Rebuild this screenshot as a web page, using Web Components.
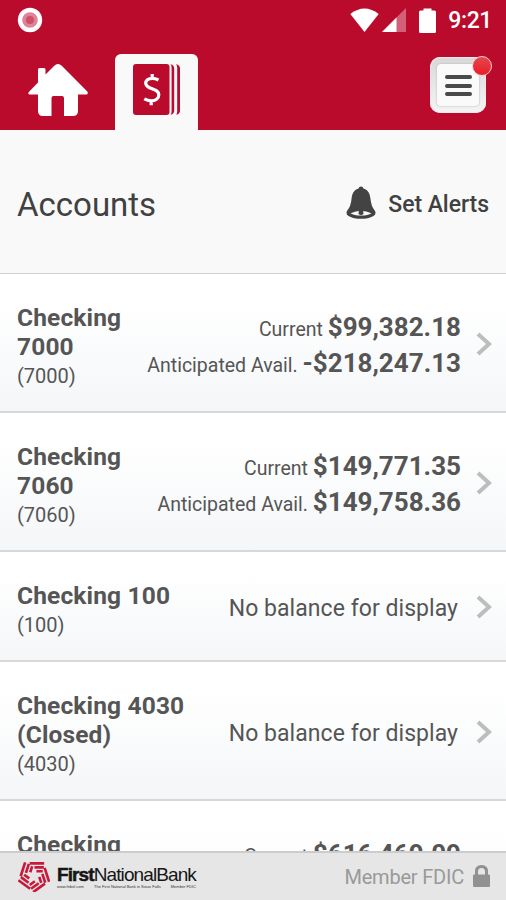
<!DOCTYPE html>
<html lang="en">
<head>
<meta charset="utf-8">
<meta name="viewport" content="width=device-width, initial-scale=1">
<title>Accounts</title>
<style>
    html, body { height: 100%; margin: 0; }
    body { overflow: hidden; font-family: Roboto, "Liberation Sans", sans-serif; }
</style>
</head>
<body>
<bank-app>
    <status-bar slot="top" time="9:21"></status-bar>
    <nav-tabs slot="top"></nav-tabs>
    <page-header heading="Accounts" action="Set Alerts"></page-header>
    <account-row name="Checking 7000" number="7000" current="$99,382.18" available="-$218,247.13"></account-row>
    <account-row name="Checking 7060" number="7060" current="$149,771.35" available="$149,758.36"></account-row>
    <account-row name="Checking 100" number="100"></account-row>
    <account-row name="Checking 4030 (Closed)" number="4030"></account-row>
    <account-row peek name="Checking" current="$616,469.09"></account-row>
    <bank-footer slot="bottom"></bank-footer>
</bank-app>

<script>
class BankApp extends HTMLElement {
    connectedCallback() {
        this.attachShadow({ mode: 'open' });
        this.shadowRoot.innerHTML = `
            <style>
                :host {
                    display: flex;
                    flex-direction: column;
                    height: 100vh;
                    background: #fff;
                    color: #555;
                    --red: #ba0b2d;
                }
                main { flex: 1; min-height: 0; overflow: hidden; }
            </style>
            <slot name="top"></slot>
            <main><slot></slot></main>
            <slot name="bottom"></slot>
        `;
    }
}

class StatusBar extends HTMLElement {
    connectedCallback() {
        this.attachShadow({ mode: 'open' });
        this.shadowRoot.innerHTML = `
            <style>
                :host {
                    display: flex;
                    align-items: center;
                    height: 42px;
                    box-sizing: border-box;
                    padding: 0 14px 0 17px;
                    background: var(--red);
                    color: #fff;
                }
                svg { display: block; flex: none; }
                .rec { margin: -2px auto 0 0; }
                .wifi { margin: -2px 3px 0 0; }
                .signal { margin: -2px 13px 0 0; }
                .battery { margin: -2px 12px 0 0; }
                .time { font-size: 23px; font-weight: 500; line-height: 42px; letter-spacing: -0.4px; }
            </style>
            <svg class="rec" width="26" height="26" viewBox="0 0 26 26">
                <circle cx="13" cy="13" r="12.2" fill="#fff"/>
                <circle cx="13" cy="13" r="7.8" fill="#df8498"/>
                <circle cx="13" cy="13" r="4" fill="#cf5068"/>
            </svg>
            <svg class="wifi" width="29" height="24" viewBox="0 0 29 24">
                <path d="M0.3 6 Q14.5 -5 28.7 6 L14.5 24Z" fill="#fff"/>
            </svg>
            <svg class="signal" width="24" height="24" viewBox="0 0 24 24">
                <path d="M0 24 24 0V24Z" fill="#fff" opacity=".35"/>
                <path d="M0 24 14.5 9.5V24Z" fill="#fff"/>
            </svg>
            <svg class="battery" width="17" height="25" viewBox="0 0 17 25">
                <path d="M1.5 2.5H4.5V0.5H12.5V2.5H15.5Q17 2.5 17 4V23.5Q17 25 15.5 25H1.5Q0 25 0 23.5V4Q0 2.5 1.5 2.5Z" fill="#fff"/>
            </svg>
            <span class="time">${this.getAttribute('time')}</span>
        `;
    }
}

class NavTabs extends HTMLElement {
    connectedCallback() {
        this.attachShadow({ mode: 'open' });
        this.shadowRoot.innerHTML = `
            <style>
                :host {
                    display: flex;
                    align-items: flex-end;
                    height: 88px;
                    box-sizing: border-box;
                    padding: 0 19px 0 28px;
                    background: var(--red);
                }
                svg { display: block; }
                .home { margin: 0 27px 14px 0; }
                .tab {
                    width: 83px;
                    height: 76px;
                    box-sizing: border-box;
                    padding: 10px 0 0 18px;
                    border-radius: 6px 6px 0 0;
                    background: #f9f9f9;
                }
                .menu {
                    position: relative;
                    margin: 0 1px 17px auto;
                    width: 56px;
                    height: 56px;
                    box-sizing: border-box;
                    padding: 7px;
                    border-radius: 10px;
                    background: linear-gradient(#d8d8d8, #f5f5f5);
                    box-shadow: inset 0 0 1px 1px #f6e9eb;
                }
                .lines {
                    display: flex;
                    flex-direction: column;
                    justify-content: center;
                    gap: 4.5px;
                    height: 42px;
                    box-sizing: border-box;
                    padding: 1px 7px 0 7.5px;
                    border-radius: 4px;
                    background: #fafafa;
                    box-shadow: 0 0 2px #aaa;
                }
                .lines i { height: 4px; border-radius: 2px; background: #4a4a4a; }
                .badge {
                    position: absolute;
                    top: -1px;
                    right: -6px;
                    width: 20px;
                    height: 20px;
                    box-sizing: border-box;
                    border: 1.5px solid #f6cfd2;
                    border-radius: 50%;
                    background: linear-gradient(#e5484b, #ea1c2c);
                }
            </style>
            <svg class="home" width="60" height="52" viewBox="0 0 60 52">
                <path d="M30 0Q32 0 34 2L59.3 27.5Q60.8 30.5 58 30.5H50V47Q50 52 45 52H36V34Q36 32 34 32H25.5Q23.5 32 23.5 34V52H15Q10 52 10 47V30.5H2Q-0.5 30.5 0.8 28L10 18.5V5.5Q10 4 11.5 4H16Q17.5 4 17.5 5.5V10.5L26 2Q28 0 30 0Z" fill="#fff"/>
            </svg>
            <div class="tab">
                <svg width="48" height="52" viewBox="0 0 48 52">
                    <rect width="36.5" height="51" rx="3" fill="#ba0b2d"/>
                    <path d="M37.5 0.2Q41.2 1 41.2 4.5V46.5Q41.2 50 37.8 50.8Q38.6 49.5 38.6 47V4Q38.6 1.5 37.5 .2ZM43 .2Q47 1 47 4.5V46.5Q47 50 43.3 50.8Q44.2 49.5 44.2 47V4Q44.2 1.5 43 .2Z" fill="#ba0b2d"/>
                    <path d="M25.5 16Q22.5 14.3 19.3 14.3C15 14.3 12.7 16.5 12.7 19.3C12.7 26 25.8 23.7 25.8 30.8C25.8 34.7 22.3 36.8 18.3 36.8Q14.5 36.8 11.3 34.9M19.2 10V14M18.2 37V41.3" fill="none" stroke="#fff" stroke-width="3.2"/>
                </svg>
            </div>
            <div class="menu">
                <div class="lines"><i></i><i></i><i></i></div>
                <span class="badge"></span>
            </div>
        `;
    }
}

class PageHeader extends HTMLElement {
    connectedCallback() {
        this.attachShadow({ mode: 'open' });
        this.shadowRoot.innerHTML = `
            <style>
                :host {
                    display: flex;
                    align-items: center;
                    height: 144px;
                    box-sizing: border-box;
                    padding: 5px 17px 0 17px;
                    border-bottom: 1.5px solid #d0d0d0;
                    background: #f9f9f9;
                    color: #414141;
                }
                h1 { margin: 2px auto 0 0; font-size: 33px; font-weight: 400; line-height: 40px; }
                .action { display: flex; align-items: center; gap: 12px; font-size: 23px; font-weight: 500; letter-spacing: -0.05px; }
                svg { display: block; margin-top: -2px; }
            </style>
            <h1>${this.getAttribute('heading')}</h1>
            <div class="action">
                <svg width="30" height="34" viewBox="0 0 30 34">
                    <path d="M15 0.5Q17 0.5 17.5 2.5C22.5 4 24 8 24.5 13Q25 20 29 25Q30.5 28 27.5 30C21 33.8 9 33.8 2.5 30Q-.5 28 1 25Q5 20 5.5 13C6 8 7.5 4 12.5 2.5Q13 .5 15 .5Z" fill="#434343"/>
                    <path d="M4.5 27.3Q15 22 25.5 27.3Q22 29.6 15 29.6T4.5 27.3Z" fill="#f9f9f9"/>
                    <path d="M13 24H17L17.5 28Q15 30 12.5 28Z" fill="#434343"/>
                </svg>
                <span>${this.getAttribute('action')}</span>
            </div>
        `;
    }
}

class AccountRow extends HTMLElement {
    connectedCallback() {
        const number = this.getAttribute('number');
        const current = this.getAttribute('current');
        const available = this.getAttribute('available');
        let balance = '<div class="none">No balance for display</div>';
        if (current) {
            balance = `<div class="line">Current <b>${current}</b></div>`;
            if (available) balance += `<div class="line">Anticipated Avail. <b>${available}</b></div>`;
        }

        this.attachShadow({ mode: 'open' });
        this.shadowRoot.innerHTML = `
            <style>
                :host {
                    display: flex;
                    align-items: center;
                    box-sizing: border-box;
                    padding: 29px 14px 21px 17px;
                    border-bottom: 2px solid #d6d8d9;
                    background: linear-gradient(#fff 20%, #f4f6f8);
                }
                .account { flex: 1; }
                .name { font-size: 24.5px; font-weight: 700; line-height: 29px; letter-spacing: 0.15px; }
                .number { font-size: 20px; line-height: 29px; padding-top: 1px; margin-bottom: -1px; }
                .balance { text-align: right; white-space: nowrap; margin-bottom: 3px; }
                .line { height: 36px; font-size: 19.5px; line-height: 36px; }
                .line b { font-size: 26px; }
                .none { margin-right: 3px; font-size: 23px; letter-spacing: 0.05px; }
                svg { display: block; margin: 0 0 6px 15px; }
                /* last row, only its top shows above the footer */
                :host([peek]) { align-items: flex-start; min-height: 139px; }
                :host([peek]) .balance { margin-top: 6px; }
                :host([peek]) svg { visibility: hidden; }
            </style>
            <div class="account">
                <div class="name">${this.getAttribute('name')}</div>
                ${number ? `<div class="number">(${number})</div>` : ''}
            </div>
            <div class="balance">${balance}</div>
            <svg width="16" height="24" viewBox="0 0 16 24">
                <path d="M2 2 13 12 2 22" fill="none" stroke="#bdbdbd" stroke-width="4"/>
            </svg>
        `;
    }
}

class BankFooter extends HTMLElement {
    connectedCallback() {
        // One arm of the pinwheel, repeated five times around the centre
        const arm = '<path d="M-4.5 -13H10.500M0.500 -8.900H10.200M2.500 -4.900H9"/>';
        const arms = [0, 72, 144, 216, 288].map(a => `<g transform="rotate(${a})">${arm}</g>`).join('');

        this.attachShadow({ mode: 'open' });
        this.shadowRoot.innerHTML = `
            <style>
                :host {
                    display: flex;
                    align-items: center;
                    height: 49px;
                    box-sizing: border-box;
                    padding: 0 16px 0 18px;
                    border-top: 2px solid #ccc;
                    background: #e6e6e6;
                }
                svg { display: block; }
                .logo { margin-top: -2px; }
                .brand { margin: 0 auto 0 7px; color: #161616; font-family: "Liberation Sans", sans-serif; white-space: nowrap; }
                .title { font-size: 19px; line-height: 21px; letter-spacing: -0.9px; }
                .title b { -webkit-text-stroke: 0.5px; }
                .tagline { display: flex; justify-content: space-between; font-size: 4px; line-height: 5px; margin-top: -1px; color: #333; }
                .member { margin-right: 9px; font-size: 20px; letter-spacing: -0.2px; color: #999; }
                .lock { margin-top: -1px; }
            </style>
            <svg class="logo" width="32" height="32" viewBox="-16.5 -16.5 33 33" fill="none" stroke="#c8193a" stroke-width="2.7">${arms}</svg>
            <div class="brand">
                <div class="title"><b>First</b>NationalBank</div>
                <div class="tagline"><span>www.fnbsf.com</span><span>The First National Bank in Sioux Falls</span><span>Member FDIC</span></div>
            </div>
            <span class="member">Member FDIC</span>
            <svg class="lock" width="17" height="22" viewBox="0 0 17 22">
                <path d="M3.5 10V6.5Q3.5 1.5 8.5 1.5T13.5 6.5V10" fill="none" stroke="#919191" stroke-width="3"/>
                <rect y="9.5" width="17" height="12.5" rx="1" fill="#919191"/>
            </svg>
        `;
    }
}

customElements.define('bank-app', BankApp);
customElements.define('status-bar', StatusBar);
customElements.define('nav-tabs', NavTabs);
customElements.define('page-header', PageHeader);
customElements.define('account-row', AccountRow);
customElements.define('bank-footer', BankFooter);
</script>
</body>
</html>
